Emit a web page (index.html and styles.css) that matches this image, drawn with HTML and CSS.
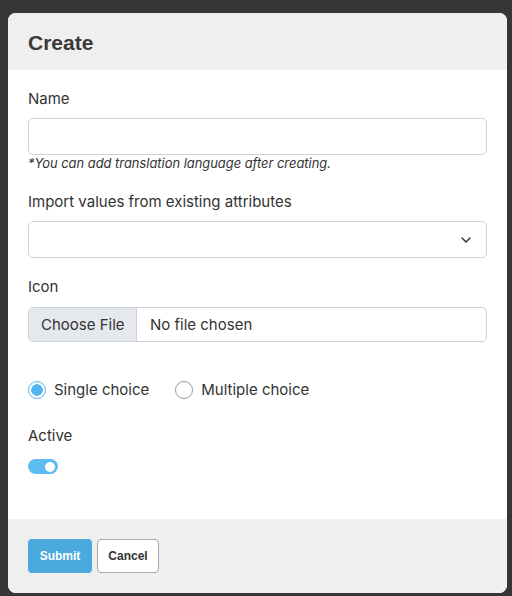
FILE: index.html
```html
<!DOCTYPE html>
<html>
<head>
<meta charset="utf-8">
<link rel="stylesheet" href="styles.css">
</head>
<body>
<div class="modal">
  <div class="modal-header">Create</div>
  <div class="modal-body">
    <div class="group">
      <div class="label">Name</div>
      <div class="field"></div>
      <div class="hint">*You can add translation language after creating.</div>
    </div>
    <div class="group">
      <div class="label">Import values from existing attributes</div>
      <div class="field select">
        <svg width="10" height="6" viewBox="0 0 10 6"><path d="M1 1 L5 5 L9 1" fill="none" stroke="#333" stroke-width="1.5" stroke-linecap="round" stroke-linejoin="round"/></svg>
      </div>
    </div>
    <div class="group">
      <div class="label">Icon</div>
      <div class="file">
        <span class="file-btn">Choose File</span>
        <span class="file-name">No file chosen</span>
      </div>
    </div>
    <div class="radios">
      <label class="radio"><span class="dot checked"></span>Single choice</label>
      <label class="radio"><span class="dot"></span>Multiple choice</label>
    </div>
    <div class="label active-label">Active</div>
    <div class="toggle"><span class="knob"></span></div>
  </div>
  <div class="modal-footer">
    <button class="btn btn-primary">Submit</button>
    <button class="btn btn-default">Cancel</button>
  </div>
</div>
</body>
</html>
```
FILE: styles.css
```css
html, body {
  margin: 0;
  padding: 0;
  background: #363636;
}
body {
  padding: 13px 5px 3px 8px;
  font-family: Inter, "Liberation Sans", sans-serif;
  color: #333;
}
.modal {
  width: 499px;
  border-radius: 8px;
  overflow: hidden;
  background: #fff;
}
.modal-header {
  box-sizing: border-box;
  height: 57px;
  padding: 18px 20px 0;
  background: #efefef;
  font-family: "Liberation Sans", Arial, sans-serif;
  font-weight: bold;
  font-size: 21px;
  line-height: 24px;
  color: #3a3a3a;
}
.modal-body {
  padding: 18px 20px 45px;
}
.group {
  margin-bottom: 18px;
}
.label {
  font-size: 15px;
  line-height: 22px;
  margin-bottom: 8px;
}
.field {
  box-sizing: border-box;
  height: 37px;
  border: 1px solid #cdd2d8;
  border-radius: 5px;
  background: #fff;
}
.select {
  display: flex;
  align-items: center;
  justify-content: flex-end;
  padding-right: 15px;
}
.hint {
  font-size: 12.9px;
  line-height: 18px;
  font-style: italic;
  color: #333;
}
.file {
  box-sizing: border-box;
  height: 35px;
  margin-top: 9px;
  border: 1px solid #cdd2d8;
  border-radius: 5px;
  display: flex;
  overflow: hidden;
  font-size: 15px;
  line-height: 33px;
}
.file-btn {
  width: 108px;
  box-sizing: border-box;
  padding-left: 12px;
  background: #e5e8ec;
  border-right: 1px solid #cdd2d8;
}
.file-name {
  padding-left: 13px;
}
.radios {
  display: flex;
  gap: 26px;
  margin-top: 37px;
  font-size: 15px;
  line-height: 22px;
}
.radio {
  display: flex;
  align-items: center;
  gap: 8px;
}
.dot {
  box-sizing: border-box;
  width: 18px;
  height: 18px;
  border-radius: 50%;
  border: 1px solid #9a9a9a;
  background: #fff;
}
.dot.checked {
  border-color: #5bb6ee;
  background: radial-gradient(circle, #53b4ee 0 5.5px, #fff 6px);
}
.active-label {
  margin-top: 24px;
  margin-bottom: 12px;
}
.toggle {
  width: 30px;
  height: 15px;
  border-radius: 8px;
  background: #5bbcf2;
  display: flex;
  align-items: center;
  justify-content: flex-end;
  padding-right: 3px;
  box-sizing: border-box;
}
.knob {
  width: 10px;
  height: 10px;
  border-radius: 50%;
  background: #fff;
}
.modal-footer {
  background: #efefef;
  padding: 20px 20px 20px;
  display: flex;
  gap: 5px;
}
.btn {
  box-sizing: border-box;
  height: 34px;
  border-radius: 4px;
  font-family: "Liberation Sans", Arial, sans-serif;
  font-weight: bold;
  font-size: 12px;
  padding: 0;
  cursor: pointer;
}
.btn-primary {
  width: 64px;
  background: #4aaade;
  border: none;
  color: #fff;
}
.btn-default {
  width: 62px;
  background: #fff;
  border: 1px solid #a9a9a9;
  color: #333;
}
```
